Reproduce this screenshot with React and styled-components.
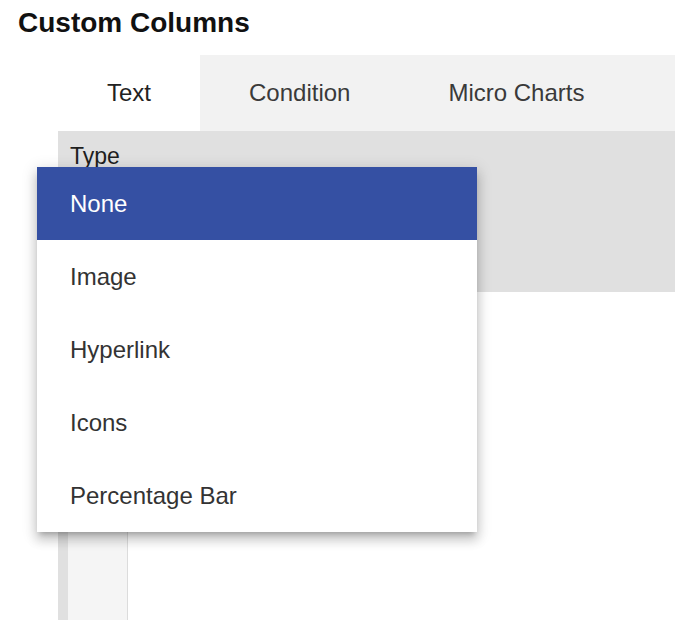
import React, { useState } from 'react'
import styled, { createGlobalStyle } from 'styled-components'

const GlobalStyle = createGlobalStyle`
  html, body {
    margin: 0;
    padding: 0;
    background: #fff;
  }
  body {
    font-family: "Liberation Sans", Arial, sans-serif;
    overflow: hidden;
  }
`

const tabs = ['Text', 'Condition', 'Micro Charts']
const options = ['None', 'Image', 'Hyperlink', 'Icons', 'Percentage Bar']

const App = () => {
  const [activeTab, setActiveTab] = useState('Text')
  const [selected, setSelected] = useState('None')

  return (
    <Page>
      <GlobalStyle />
      <Title>Custom Columns</Title>
      <Tabs>
        <TabList>
          {tabs.map((tab) => (
            <Tab
              key={tab}
              $active={activeTab === tab}
              onClick={() => setActiveTab(tab)}
            >
              {tab}
            </Tab>
          ))}
        </TabList>
        <Panel>
          <Label>Type</Label>
          <Menu>
            {options.map((opt) => (
              <MenuItem
                key={opt}
                $selected={selected === opt}
                onClick={() => setSelected(opt)}
              >
                {opt}
              </MenuItem>
            ))}
          </Menu>
        </Panel>
        <Body>
          <Sidebar>
            <SideEdge />
            <SideFill />
          </Sidebar>
        </Body>
      </Tabs>
    </Page>
  )
}

export default App

const Page = styled.div`
  width: 675px;
  height: 620px;
  display: flex;
  flex-direction: column;
`

const Title = styled.h2`
  margin: 7px 0 0 18px;
  font-size: 28px;
  line-height: 31px;
  font-weight: bold;
  color: #111;
`

const Tabs = styled.div`
  margin: 17px 0 0 58px;
  flex: 1;
  display: flex;
  flex-direction: column;
  position: relative;
`

const TabList = styled.div`
  display: flex;
  height: 76px;
  background: #f2f2f2;
`

const Tab = styled.div`
  display: flex;
  align-items: center;
  padding: 0 49px;
  font-size: 24px;
  color: ${(p) => (p.$active ? '#222' : '#3a3a3a')};
  background: ${(p) => (p.$active ? '#fff' : 'transparent')};
  cursor: pointer;
`

const Panel = styled.div`
  height: 161px;
  background: #e0e0e0;
  padding: 12px 12px;
  box-sizing: border-box;
  position: relative;
`

const Label = styled.div`
  font-size: 23px;
  line-height: 26px;
  color: #1e1e1e;
`

const Menu = styled.div`
  position: absolute;
  left: -21px;
  top: 36px;
  width: 440px;
  background: #fff;
  box-shadow: 0 5px 5px -3px rgba(0, 0, 0, 0.2), 0 8px 10px 1px rgba(0, 0, 0, 0.14),
    0 3px 14px 2px rgba(0, 0, 0, 0.12);
  z-index: 2;
`

const MenuItem = styled.div`
  height: 73px;
  display: flex;
  align-items: center;
  padding-left: 33px;
  font-size: 24px;
  color: ${(p) => (p.$selected ? '#fff' : '#333')};
  background: ${(p) => (p.$selected ? '#3550a3' : '#fff')};
  cursor: pointer;
`

const Body = styled.div`
  flex: 1;
  display: flex;
`

const Sidebar = styled.div`
  display: flex;
  width: 70px;
`

const SideEdge = styled.div`
  width: 10px;
  background: #e0e0e0;
`

const SideFill = styled.div`
  flex: 1;
  background: #f5f5f5;
  border-right: 1px solid #dcdcdc;
`
